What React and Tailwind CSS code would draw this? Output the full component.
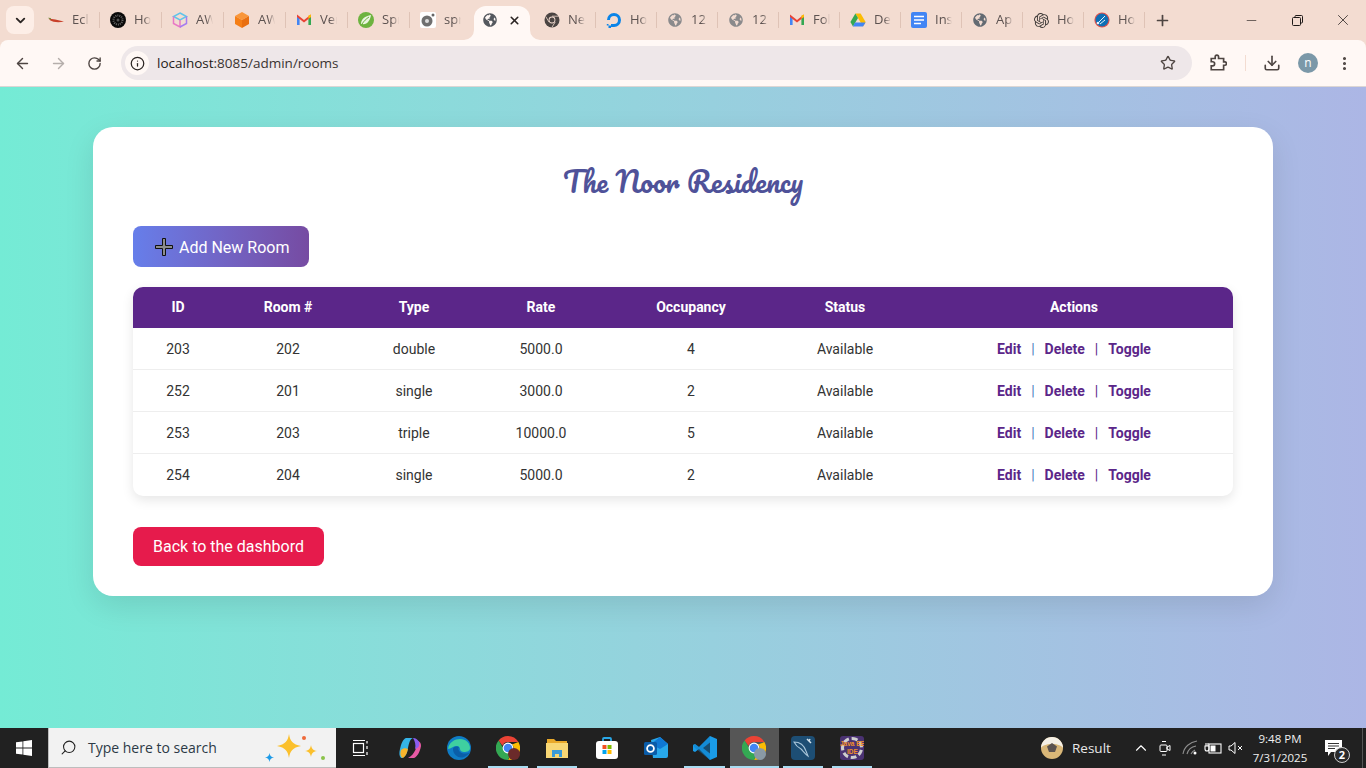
import { ArrowLeft, ArrowRight, RotateCw, Info, Star, Download, MoreVertical, ChevronDown, X, Plus, Minus, Search, ChevronUp } from 'lucide-react';
import { FaGlobeAmericas } from 'react-icons/fa';
import { SiOpenai } from 'react-icons/si';

const rooms = [
    { id: 203, room: 202, type: 'double', rate: '5000.0', occupancy: 4 },
    { id: 252, room: 201, type: 'single', rate: '3000.0', occupancy: 2 },
    { id: 253, room: 203, type: 'triple', rate: '10000.0', occupancy: 5 },
    { id: 254, room: 204, type: 'single', rate: '5000.0', occupancy: 2 },
];

const Gmail = () => (
    <svg width="16" height="16" viewBox="0 0 16 16">
        <path d="M1 4v9h2.600V6.500L1 4z" fill="#4285f4" />
        <path d="M15 4v9h-2.600V6.500L15 4z" fill="#34a853" />
        <path d="M1 2.600 8 8l7-5.400V5L8 10.400 1 5V2.600z" fill="#ea4335" />
        <path d="M12.400 3.600 15 2.600V5l-2.600 1.800V3.600z" fill="#fbbc04" />
    </svg>
);

const ChromeMono = ({ size = 16 }) => (
    <svg width={size} height={size} viewBox="0 0 16 16">
        <circle cx="8" cy="8" r="7.500" fill="#4a4442" />
        <circle cx="8" cy="8" r="3.400" fill="#f3dcd1" />
        <circle cx="8" cy="8" r="2.500" fill="#4a4442" />
        <path d="M8 4.200h6.600M5 10 1.800 4.600M11.200 10 8 15.200" stroke="#f3dcd1" strokeWidth="0.800" />
    </svg>
);

const ChromeColor = ({ badge }) => (
    <svg width="24" height="24" viewBox="0 0 24 24">
        <path d="M12 0a12 12 0 0 1 10.400 6H12a6 6 0 0 0-5.600 3.800L2.600 4.400A12 12 0 0 1 12 0z" fill="#ea4335" />
        <path d="M22.400 6A12 12 0 0 1 12 24l5.200-9A6 6 0 0 0 16 8.400z" fill="#fbbc04" />
        <path d="M12 24A12 12 0 0 1 2.600 4.400L7.800 13a6 6 0 0 0 7 4.400z" fill="#34a853" />
        <circle cx="12" cy="12" r="5.400" fill="#fff" />
        <circle cx="12" cy="12" r="4.300" fill="#4285f4" />
        {badge === 'photo' && <circle cx="18" cy="18" r="6" fill="#6b2a2a" />}
        {badge === 'n' && <circle cx="18" cy="18" r="6" fill="#8a9aa5" />}
    </svg>
);

const tabs = [
    { label: 'Ecl', icon: <svg width="16" height="16" viewBox="0 0 16 16"><path d="M1 6.500c3 .8 9 1.200 15 3-5 1.300-11 .8-14-1.200z" fill="#c8402a" /><path d="M0 5.800 3 6 2.500 8z" fill="#7a8a3c" /></svg> },
    { label: 'Ho', icon: <svg width="16" height="16" viewBox="0 0 16 16"><circle cx="8" cy="8" r="8" fill="#0a0a0a" /><circle cx="8" cy="8" r="4.500" fill="none" stroke="#666" strokeDasharray="1 1" strokeWidth="2" /><circle cx="8" cy="8" r="1.500" fill="#555" /></svg> },
    { label: 'AW', icon: <svg width="16" height="16" viewBox="0 0 16 16" fill="none" strokeWidth="1.500"><path d="M8 1 14.500 4.500 8 8 1.500 4.500z" stroke="#5fc4ea" /><path d="M1.500 4.500v7L8 15V8" stroke="#e879c6" /><path d="M14.500 4.500v7L8 15" stroke="#a67cf0" /></svg> },
    { label: 'AW', icon: <svg width="16" height="16" viewBox="0 0 16 16"><path d="M8 0 15 4 8 8 1 4z" fill="#f9963a" /><path d="M1 4l7 4v8l-7-4z" fill="#f57f17" /><path d="M15 4 8 8v8l7-4z" fill="#e96f10" /></svg> },
    { label: 'Ver', icon: <Gmail /> },
    { label: 'Spr', icon: <svg width="16" height="16" viewBox="0 0 16 16"><circle cx="8" cy="8" r="8" fill="#6db33f" /><path d="M3 12c0-5 4-8 10-9-1 6-4 10-9 9z" fill="#eaf5e0" /><path d="M4 12c2-3 4-5 7-7" stroke="#6db33f" fill="none" /></svg> },
    { label: 'spr', icon: <svg width="16" height="16" viewBox="0 0 16 16"><rect width="16" height="16" rx="2" fill="#fff" /><circle cx="7" cy="9" r="5.500" fill="#6f6f6f" /><circle cx="7" cy="9" r="2" fill="#ddd" /><circle cx="13" cy="3" r="1.500" fill="#666" /></svg> },
    { active: true, icon: <FaGlobeAmericas size={14} className="text-[#54585e]" /> },
    { label: 'Ne', icon: <ChromeMono /> },
    { label: 'Ho', icon: <svg width="16" height="16" viewBox="0 0 16 16" fill="none"><path d="M8 15a7 7 0 1 0-7-7h3a4 4 0 1 1 4 4z" fill="#0a84e8" /><path d="M5 12h3v3H5zM2.500 13.500H5V16H2.500zM.8 12h1.700v1.500H.8z" fill="#0a84e8" /></svg> },
    { label: '12', icon: <FaGlobeAmericas size={14} className="text-[#8a8a8c]" /> },
    { label: '12', icon: <FaGlobeAmericas size={14} className="text-[#8a8a8c]" /> },
    { label: 'Fol', icon: <Gmail /> },
    { label: 'De', icon: <svg width="16" height="16" viewBox="0 0 16 16"><path d="M5.400 1.500h5.200L15.600 10l-2.600 4.500L8 6z" fill="#fbbc04" /><path d="M5.400 1.500 8 6l-5 8.500L.4 10z" fill="#34a853" /><path d="M5 10.500h10.600L13 14.500H2.800z" fill="#4285f4" /></svg> },
    { label: 'Ins', icon: <svg width="16" height="16" viewBox="0 0 16 16"><rect width="16" height="16" rx="2" fill="#4285f4" /><path d="M3 4.500h10M3 8h10M3 11.500h7" stroke="#fff" strokeWidth="1.600" /></svg> },
    { label: 'Ap', icon: <FaGlobeAmericas size={14} className="text-[#636a72]" /> },
    { label: 'Ho', icon: <SiOpenai size={15} className="text-[#3f3b39]" /> },
    { label: 'Ho', icon: <svg width="16" height="16" viewBox="0 0 16 16"><circle cx="8" cy="8" r="7.600" fill="#e0524d" /><circle cx="8" cy="8" r="6.500" fill="#0e6fb5" /><path d="M4 11 11 4M6 12l5-4" stroke="#e6f2fa" strokeWidth="1" /><circle cx="4" cy="11" r="1.300" fill="#e6f2fa" /></svg> },
];

const ToolIcon = ({ children }) => (
    <div className="w-[36px] h-[36px] flex items-center justify-center text-[#4e4542]">{children}</div>
);

const TabStrip = () => (
    <div className="h-[40px] bg-[#f3dcd1] flex items-start relative">
        <div className="w-[28px] h-[28px] mt-[6px] ml-[6px] mr-[4px] rounded-lg bg-[#fdeee7] flex items-center justify-center">
            <ChevronDown size={15} strokeWidth={3} className="text-[#2b2523]" />
        </div>
        {tabs.map((tab, i) => tab.active ? (
            <div key={i} className="w-[62px] h-[40px] pt-[6px] pl-[2px] pr-[4px] relative">
                <div className="h-[34px] bg-[#fff8f5] rounded-t-xl flex items-center pl-[8px] pb-[6px] relative">
                    <div className="w-[16px] flex justify-center">{tab.icon}</div>
                    <X size={13} strokeWidth={3} className="ml-[10px] text-[#2b2523]" />
                    <svg width="10" height="10" viewBox="0 0 10 10" className="absolute bottom-0 -left-[10px]"><path d="M10 0v10H0a10 10 0 0 0 10-10z" fill="#fff8f5" /></svg>
                    <svg width="10" height="10" viewBox="0 0 10 10" className="absolute bottom-0 -right-[10px]"><path d="M0 0v10h10A10 10 0 0 1 0 0z" fill="#fff8f5" /></svg>
                </div>
            </div>
        ) : (
            <div key={i} className={`${i < 9 ? 'w-[62px]' : 'w-[61px]'} h-[40px] flex items-center pl-[10px] relative`}>
                <div className="w-[16px] flex justify-center shrink-0">{tab.icon}</div>
                <div className="ml-[8px] w-[17px] overflow-hidden whitespace-nowrap text-[13px] text-[#5c5250] font-['Open_Sans',sans-serif] [mask-image:linear-gradient(to_right,black_60%,transparent)]">{tab.label}</div>
                {i !== 6 && <div className="absolute right-0 top-[12px] h-[16px] w-[1px] bg-[#dfc3b6]" />}
            </div>
        ))}
        <div className="w-[34px] h-[34px] mt-[3px] flex items-center justify-center">
            <Plus size={17} strokeWidth={2.400} className="text-[#4e4542]" />
        </div>
        <div className="ml-auto flex text-[#1f1a18]">
            <div className="w-[46px] h-[40px] flex items-center justify-center"><Minus size={15} strokeWidth={1} /></div>
            <div className="w-[46px] h-[40px] flex items-center justify-center">
                <svg width="11" height="11" viewBox="0 0 11 11" fill="none" stroke="currentColor"><rect x="0.500" y="2.500" width="8" height="8" rx="1" /><path d="M3 2.500V1.500a1 1 0 0 1 1-1h5.500a1 1 0 0 1 1 1V7a1 1 0 0 1-1 1h-1" /></svg>
            </div>
            <div className="w-[46px] h-[40px] flex items-center justify-center"><X size={18} strokeWidth={1} /></div>
        </div>
    </div>
);

const Toolbar = () => (
    <div className="h-[47px] bg-[#f3dcd1] shrink-0">
        <div className="h-[47px] bg-[#fff8f5] rounded-t-lg flex items-center pl-[4px] pr-[4px] border-b border-[#dcd6d4]">
            <ToolIcon><ArrowLeft size={17} strokeWidth={2} /></ToolIcon>
            <ToolIcon><ArrowRight size={17} strokeWidth={2} className="text-[#b5aeab]" /></ToolIcon>
            <ToolIcon><RotateCw size={15} strokeWidth={2.200} /></ToolIcon>
            <div className="ml-[9px] w-[1071px] h-[34px] rounded-full bg-[#eee7e9] flex items-center pl-[4px] pr-[16px]">
                <div className="w-[24px] h-[24px] rounded-full bg-[#fff8f5] flex items-center justify-center text-[#2b2523]">
                    <Info size={15} strokeWidth={2} />
                </div>
                <div className="ml-[8px] text-[13.500px] text-[#3a3331] font-['Open_Sans',sans-serif]">
                    <span className="text-[#1f1a18]">localhost</span>:8085/admin/rooms
                </div>
                <Star size={16} strokeWidth={2} className="ml-auto text-[#4e4542]" />
            </div>
            <div className="ml-[8px] flex items-center">
                <ToolIcon>
                    <svg width="18" height="18" viewBox="0 0 16 16" fill="none" stroke="currentColor" strokeWidth="1.500"><path d="M2 4h3.500V2.500a1.500 1.500 0 0 1 3 0V4H13v3h1a1.500 1.500 0 0 1 0 3h-1v4H2v-3.500h1.200a1.800 1.800 0 0 0 0-3.600H2z" /></svg>
                </ToolIcon>
                <div className="w-[1px] h-[16px] bg-[#f3dcd1] ml-[9px] mr-[8px]" />
                <ToolIcon><Download size={18} strokeWidth={2.200} /></ToolIcon>
                <ToolIcon>
                    <div className="w-[20px] h-[20px] rounded-full bg-[#7b98a8] text-white text-[12px] flex items-center justify-center font-['Open_Sans',sans-serif]">n</div>
                </ToolIcon>
                <ToolIcon><MoreVertical size={17} strokeWidth={2.400} /></ToolIcon>
            </div>
        </div>
    </div>
);

const Sparkle = ({ className, fill, size }) => (
    <svg width={size} height={size} viewBox="0 0 20 20" className={className}>
        <path d="M10 0c1 6 3 8.500 10 10-7 1.500-9 4-10 10-1-6-3-8.500-10-10 7-1.500 9-4 10-10z" fill={fill} />
    </svg>
);

const TaskIcon = ({ children, active, line }) => (
    <div className={`w-[49.200px] h-[40px] flex items-center justify-center relative ${active ? 'bg-[#565656]' : ''}`}>
        {children}
        {line && <div className={`absolute bottom-0 h-[2px] bg-[#a9dcf2] ${active ? 'inset-x-0' : 'left-[4px] right-[5px]'}`} />}
    </div>
);

const Taskbar = () => (
    <div className="h-[40px] bg-[#212121] flex items-center shrink-0 text-white">
        <div className="w-[48px] h-[40px] flex items-center justify-center">
            <svg width="16" height="16" viewBox="0 0 16 16" fill="#fff"><path d="M0 2.300 6.500 1.400v6.200H0zM7.300 1.300 16 0v7.600H7.300zM0 8.400h6.500v6.200L0 13.700zM7.300 8.400H16V16l-8.700-1.300z" /></svg>
        </div>
        <div className="w-[288px] h-[40px] bg-[#f2f2f2] border-b border-l border-[#bdbdbd] flex items-center pl-[11px] relative">
            <Search size={17} strokeWidth={1.500} className="text-[#222] -scale-x-100" />
            <span className="ml-[11px] text-[14px] text-[#2c3a46] font-['Open_Sans',sans-serif]">Type here to search</span>
            <Sparkle size={24} fill="#fbc02d" className="absolute left-[228px] top-[6px]" />
            <Sparkle size={12} fill="#fbc02d" className="absolute left-[256px] top-[17px]" />
            <Sparkle size={9} fill="#1e9be8" className="absolute left-[216px] top-[25px]" />
            <div className="absolute left-[253px] top-[8px] w-[4px] h-[4px] rounded-full bg-[#ef6a3a]" />
            <div className="absolute left-[272px] top-[28px] w-[4px] h-[4px] rounded-full bg-[#8bc34a]" />
        </div>
        <TaskIcon>
            <svg width="18" height="18" viewBox="0 0 18 18" fill="none" stroke="#fff" strokeWidth="1.200"><rect x="1.500" y="4.500" width="10" height="9" /><path d="M1 1.500h12M1 16.500h12M15 2v2.500M15 7v3M15 13v3" /></svg>
        </TaskIcon>
        <TaskIcon>
            <svg width="24" height="24" viewBox="0 0 24 24"><path d="M8 2h7c-3 1-4 5-5 10-1 6-3 9-6 10H3C1 20 1 17 2 13 3 8 5 3 8 2z" fill="#35b4e8" /><path d="M10 22h6c3-1 6-6 7-12 0-3-1-4-3-5-1 5-3 14-10 17z" fill="#e85aa5" /><path d="M15 2c3 0 5 2 6 4 1 4-1 6-4 7 1-4 0-8-2-11z" fill="#8a5cf0" /><path d="M3 14c2-2 5-2 7-1-1 4-2 7-5 9-3-1-3-5-2-8z" fill="#f7b32b" /></svg>
        </TaskIcon>
        <TaskIcon>
            <svg width="24" height="24" viewBox="0 0 24 24"><circle cx="12" cy="12" r="12" fill="#0f7cc6" /><path d="M1 13C2 6 8 3 13 3c6 0 10 4 10 9 0 3-3 4-6 4-2 0-4-1-4-3 0-3-4-4-7-2-2 1-4 2-5 2z" fill="#3fcfa0" /><path d="M6 13c0 6 6 10 11 8 2-1 4-2 6-5-3 2-7 2-10 0-2-2-2-4-1-5-3-1-6 0-6 2z" fill="#0a5ea8" /></svg>
        </TaskIcon>
        <TaskIcon line><ChromeColor badge="photo" /></TaskIcon>
        <TaskIcon line>
            <svg width="22" height="20" viewBox="0 0 22 20"><path d="M1 1h7l2 2h11v4H1z" fill="#e9a92a" /><path d="M0 5h22v15H0z" fill="#f8d775" /><path d="M6 19v-7h10v7h-3v-3H9v3z" fill="#3b9bd8" /></svg>
        </TaskIcon>
        <TaskIcon>
            <svg width="24" height="24" viewBox="0 0 24 24"><path d="M8 6V3a1 1 0 0 1 1-1h6a1 1 0 0 1 1 1v3" fill="none" stroke="#2aa8e8" strokeWidth="1.800" /><rect x="1" y="5" width="22" height="18" rx="3" fill="#fff" /><rect x="7.500" y="9" width="4" height="4" fill="#f25022" /><rect x="12.500" y="9" width="4" height="4" fill="#7fba00" /><rect x="7.500" y="14" width="4" height="4" fill="#00a4ef" /><rect x="12.500" y="14" width="4" height="4" fill="#ffb900" /></svg>
        </TaskIcon>
        <TaskIcon>
            <svg width="24" height="24" viewBox="0 0 24 24"><path d="M7 4 16 1l8 7v12a2 2 0 0 1-2 2H9z" fill="#28a8ea" /><path d="M16 1l8 7-8 5-9-5z" fill="#0f78d4" /><rect x="0" y="6" width="13" height="13" rx="1.500" fill="#0a5ca8" /><circle cx="6.500" cy="12.500" r="3.400" fill="none" stroke="#fff" strokeWidth="1.800" /></svg>
        </TaskIcon>
        <TaskIcon line>
            <svg width="24" height="24" viewBox="0 0 24 24"><path d="M17 0 24 3v18l-7 3L6 13l-4 3-2-1V9l2-1 4 3z" fill="#1a9ce8" /><path d="M17 6.500 10 12l7 5.500z" fill="#212121" /><path d="M17 0 6 11l-4-3-2 1 2 3 15 12z" fill="#0e7cc4" opacity="0.500" /></svg>
        </TaskIcon>
        <TaskIcon active line><ChromeColor badge="n" /></TaskIcon>
        <TaskIcon line>
            <svg width="24" height="24" viewBox="0 0 24 24"><rect width="24" height="24" rx="4" fill="#1d4e74" /><path d="M3 6c5 0 10 3 12 9l2 5c-3-2-5-5-7-7-2-1-5-3-7-7z" fill="none" stroke="#a9c6da" strokeWidth="1.100" /><path d="M16 3l4 4M19 3l-1 2" stroke="#d5e3ec" strokeWidth="1.500" /></svg>
        </TaskIcon>
        <TaskIcon line>
            <div className="w-[24px] h-[24px] rounded-[3px] bg-[#4a3272] relative flex items-center justify-center overflow-hidden">
                <div className="absolute w-[22px] h-[22px] rounded-full border-[3px] border-dashed border-[#cfcfcf]" />
                <div className="relative text-[6.500px] leading-[8px] font-bold text-[#f0902a] text-center whitespace-nowrap font-['Liberation_Sans',sans-serif]">Java EE<br />IDE</div>
            </div>
        </TaskIcon>
        <div className="ml-auto flex items-center h-[40px] pr-[3px] font-['Open_Sans',sans-serif]">
            <svg width="22" height="22" viewBox="0 0 22 22"><circle cx="11" cy="11" r="11" fill="#d9b778" /><path d="M0 11a11 11 0 0 1 22 0c-1-2-5-4-11-4S1 9 0 11z" fill="#f5f0e6" /><path d="M11 6l5 3.500-2 5.500H8L6 9.500z" fill="#5b5350" /></svg>
            <span className="ml-[9px] w-[37px] text-[13.500px] text-[#e8e8e8] whitespace-nowrap">Result</span>
            <ChevronUp size={18} strokeWidth={1.500} className="ml-[23px] text-white" />
            <svg width="14" height="18" viewBox="0 0 14 18" fill="none" stroke="#fff" strokeWidth="1" className="ml-[8px]"><rect x="2" y="6" width="7" height="6.500" rx="1" /><path d="m9 8 3-1.500v5L9 10zM4 2.500h4M4 16h4" /></svg>
            <svg width="18" height="16" viewBox="0 0 18 16" fill="none" stroke="#8f8f8f" strokeWidth="1.100" className="ml-[10px]"><path d="M1 14C2 7 8 2 15 1M5 14c1-4 4-7 9-8M9 14c1-2 2-3 4-4" /><circle cx="13" cy="13" r="1.500" fill="#fff" stroke="none" /></svg>
            <svg width="18" height="14" viewBox="0 0 18 14" fill="none" stroke="#fff" strokeWidth="1.100" className="ml-[4px]"><rect x="5" y="3" width="12" height="9" /><rect x="6.500" y="4.500" width="5" height="6" fill="#fff" stroke="none" /><path d="M1 5h4v3a2 2 0 0 1-4 0zM2 2v3M4 2v3" /></svg>
            <svg width="16" height="14" viewBox="0 0 16 14" fill="none" stroke="#fff" strokeWidth="1" className="ml-[6px]"><path d="M1 5v4h2l4 3.500v-11L3 5zM10 5l4 4M14 5l-4 4" /></svg>
            <div className="ml-[4px] w-[64px] text-center text-[#f0f0f0] text-[11.500px] leading-[19px]">
                <div>9:48 PM</div>
                <div>7/31/2025</div>
            </div>
            <div className="ml-[2px] w-[38px] h-[40px] relative flex items-center justify-center">
                <svg width="17" height="17" viewBox="0 0 17 17"><path d="M0 0h17v12H6l-3 4v-4H0z" fill="#fff" /><path d="M3 3.500h11M3 6h11M3 8.500h7" stroke="#333" /></svg>
                <div className="absolute left-[20px] top-[19px] w-[16px] h-[16px] rounded-full bg-[#2b2b2b] border border-[#cfcfcf] text-[11px] leading-[14px] text-center font-bold">2</div>
            </div>
            <div className="w-[10px]" />
            <div className="w-[1px] h-[40px] bg-[#555]" />
        </div>
    </div>
);

export default function App() {
    return (
        <div className="h-screen flex flex-col overflow-hidden">
            <TabStrip />
            <Toolbar />
            <main className="flex-1 bg-gradient-to-r from-[#74ebd5] to-[#acb6e5] pt-[40px] font-['Roboto',sans-serif]">
                <div className="w-[1180px] ml-[93px] h-[469px] bg-white rounded-[20px] px-[40px] pt-[30px] shadow-[0_10px_30px_rgba(0,0,0,0.1)]">
                    <h1 className="h-[49px] text-center text-[28px] leading-[50px] text-[#4f5299] font-['Pacifico',cursive]">The Noor Residency</h1>
                    <div className="mt-[20px]">
                        <button className="w-[176px] h-[41px] rounded-lg bg-gradient-to-r from-[#667eea] to-[#764ba2] text-white text-[16px] flex items-center pl-[22px] relative">
                            <svg width="18" height="18" viewBox="0 0 18 18" className="shrink-0"><path d="M7.500 0.500h3v7h7v3h-7v7h-3v-7h-7v-3h7z" fill="#8c8c8c" stroke="#111" /></svg>
                            <span className="ml-[6px] mt-[2px]">Add New Room</span>
                        </button>
                    </div>
                    <div className="mt-[20px] rounded-[10px] overflow-hidden shadow-[0_4px_12px_rgba(0,0,0,0.1)]">
                        <table className="w-[1100px] table-fixed border-separate border-spacing-0 text-[14px] text-center text-[#333]">
                            <colgroup>
                                <col className="w-[90px]" />
                                <col className="w-[130px]" />
                                <col className="w-[122px]" />
                                <col className="w-[132px]" />
                                <col className="w-[168px]" />
                                <col className="w-[140px]" />
                                <col className="w-[318px]" />
                            </colgroup>
                            <thead>
                                <tr className="h-[41px] bg-[#5b2689] text-white font-bold">
                                    {['ID', 'Room #', 'Type', 'Rate', 'Occupancy', 'Status', 'Actions'].map(h => (
                                        <th key={h} className="font-bold">{h}</th>
                                    ))}
                                </tr>
                            </thead>
                            <tbody>
                                {rooms.map((r, i) => {
                                    const cell = i < rooms.length - 1 ? 'border-b border-[#eeeeee] pt-[1px]' : '';
                                    return (
                                        <tr key={r.id} className="h-[42px]">
                                            <td className={cell}>{r.id}</td>
                                            <td className={cell}>{r.room}</td>
                                            <td className={cell}>{r.type}</td>
                                            <td className={cell}>{r.rate}</td>
                                            <td className={cell}>{r.occupancy}</td>
                                            <td className={cell}>Available</td>
                                            <td className={`${cell} font-bold text-[#5b2689]`}>
                                                <a>Edit</a>
                                                <span className="mx-[10px] font-normal text-[#4a7fc0]">|</span>
                                                <a>Delete</a>
                                                <span className="mx-[10px] font-normal">|</span>
                                                <a>Toggle</a>
                                            </td>
                                        </tr>
                                    );
                                })}
                            </tbody>
                        </table>
                    </div>
                    <button className="mt-[31px] w-[191px] h-[39px] rounded-lg bg-[#e61b4c] text-white text-[16px]">Back to the dashbord</button>
                </div>
            </main>
            <Taskbar />
        </div>
    );
}
